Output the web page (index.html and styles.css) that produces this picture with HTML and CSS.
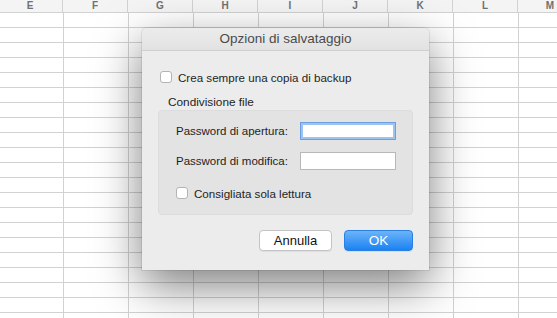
FILE: index.html
```html
<!DOCTYPE html>
<html lang="it">

<head>
    <meta charset="UTF-8">
    <meta name="viewport" content="width=device-width, initial-scale=1.0">
    <title>Opzioni di salvataggio</title>
    <link rel="stylesheet" href="styles.css">
</head>

<body>
    <div class="sheet">
        <div class="col-header">
            <div class="col">E</div>
            <div class="col">F</div>
            <div class="col">G</div>
            <div class="col">H</div>
            <div class="col">I</div>
            <div class="col">J</div>
            <div class="col">K</div>
            <div class="col">L</div>
            <div class="col">M</div>
        </div>
        <div class="cells"></div>
    </div>

    <!-- Save options dialog -->
    <div class="dialog">
        <div class="titlebar">Opzioni di salvataggio</div>
        <div class="dialog-body">
            <label class="check-row">
                <input type="checkbox" class="check">
                <span>Crea sempre una copia di backup</span>
            </label>

            <div class="group-title">Condivisione file</div>
            <div class="group">
                <div class="field-row">
                    <span class="field-label">Password di apertura:</span>
                    <input type="password" class="field focused">
                </div>
                <div class="field-row">
                    <span class="field-label">Password di modifica:</span>
                    <input type="password" class="field">
                </div>
                <label class="check-row inner">
                    <input type="checkbox" class="check">
                    <span>Consigliata sola lettura</span>
                </label>
            </div>

            <div class="buttons">
                <button class="btn">Annulla</button>
                <button class="btn primary">OK</button>
            </div>
        </div>
    </div>
</body>

</html>
```

FILE: styles.css
```css
/* Reset styles */
* {
    margin: 0;
    padding: 0;
    box-sizing: border-box;
}

body {
    font-family: "Liberation Sans", Arial, sans-serif;
    background: white;
    width: 557px;
    height: 318px;
    overflow: hidden;
    position: relative;
}

/* Spreadsheet behind the dialog */
.sheet {
    height: 100%;
    display: flex;
    flex-direction: column;
}

.col-header {
    display: flex;
    height: 13px;
    margin-left: -2px;
    background: #f4f4f4;
    border-bottom: 1px solid #d2d2d2;
}

.col {
    flex: 0 0 65px;
    border-right: 1px solid #d2d2d2;
    text-align: center;
    font-size: 10px;
    font-weight: bold;
    line-height: 12px;
    color: #707070;
}

.cells {
    flex: 1;
    background-image:
        repeating-linear-gradient(to bottom, transparent 0, transparent 14px, #d2d2d2 14px, #d2d2d2 15px),
        repeating-linear-gradient(to right, transparent 0, transparent 63px, #d2d2d2 63px, #d2d2d2 64px, transparent 64px, transparent 65px);
}

/* Dialog */
.dialog {
    position: absolute;
    left: 142px;
    top: 28px;
    width: 287px;
    height: 242px;
    background: #ececec;
    border-radius: 5px 5px 0 0;
    box-shadow: 0 0 0 1px rgba(0, 0, 0, 0.08), 0 16px 46px rgba(0, 0, 0, 0.5);
    color: #1e1e1e;
}

.titlebar {
    height: 23px;
    border-bottom: 1px solid #cfcfcf;
    background: linear-gradient(#ececec, #e2e2e2);
    border-radius: 5px 5px 0 0;
    text-align: center;
    font-size: 13.5px;
    line-height: 22px;
    color: #4b4b4b;
}

.dialog-body {
    padding: 20px 16px 19px;
}

.check-row {
    display: flex;
    align-items: center;
    gap: 6px;
    height: 12px;
    padding-left: 2px;
    font-size: 11.6px;
}

.check {
    appearance: none;
    width: 12px;
    height: 12px;
    background: white;
    border: 1px solid #b4b4b4;
    border-radius: 3px;
}

.group-title {
    margin-top: 12px;
    height: 15px;
    padding-left: 10px;
    font-size: 11.8px;
    line-height: 14px;
}

.group {
    height: 105px;
    padding: 11px 16px 0 17px;
    background: #e3e3e3;
    border: 1px solid #dcdcdc;
    border-radius: 4px;
    display: flex;
    flex-direction: column;
    gap: 12px;
}

.field-row {
    display: flex;
    align-items: center;
    justify-content: space-between;
    height: 18px;
    font-size: 11.5px;
}

.field {
    width: 96px;
    height: 18px;
    background: white;
    border: 1px solid #b8b8b8;
    outline: none;
}

.field.focused {
    border-color: #6d9fe0;
    box-shadow: inset 0 0 0 2px #9fc3f1;
}

.check-row.inner {
    margin-top: 5px;
    padding-left: 0;
}

.buttons {
    margin-top: 15px;
    display: flex;
    justify-content: flex-end;
    gap: 12px;
}

.btn {
    height: 21px;
    width: 73px;
    font-family: inherit;
    font-size: 13px;
    color: #111;
    background: white;
    border: 1px solid #c4c4c4;
    border-radius: 4px;
    box-shadow: 0 1px 0 rgba(0, 0, 0, 0.06);
}

.btn.primary {
    width: 69px;
    color: white;
    font-size: 13.5px;
    background: linear-gradient(#6db4fa, #1a82f3);
    border-color: #2a7fe0;
}
```
